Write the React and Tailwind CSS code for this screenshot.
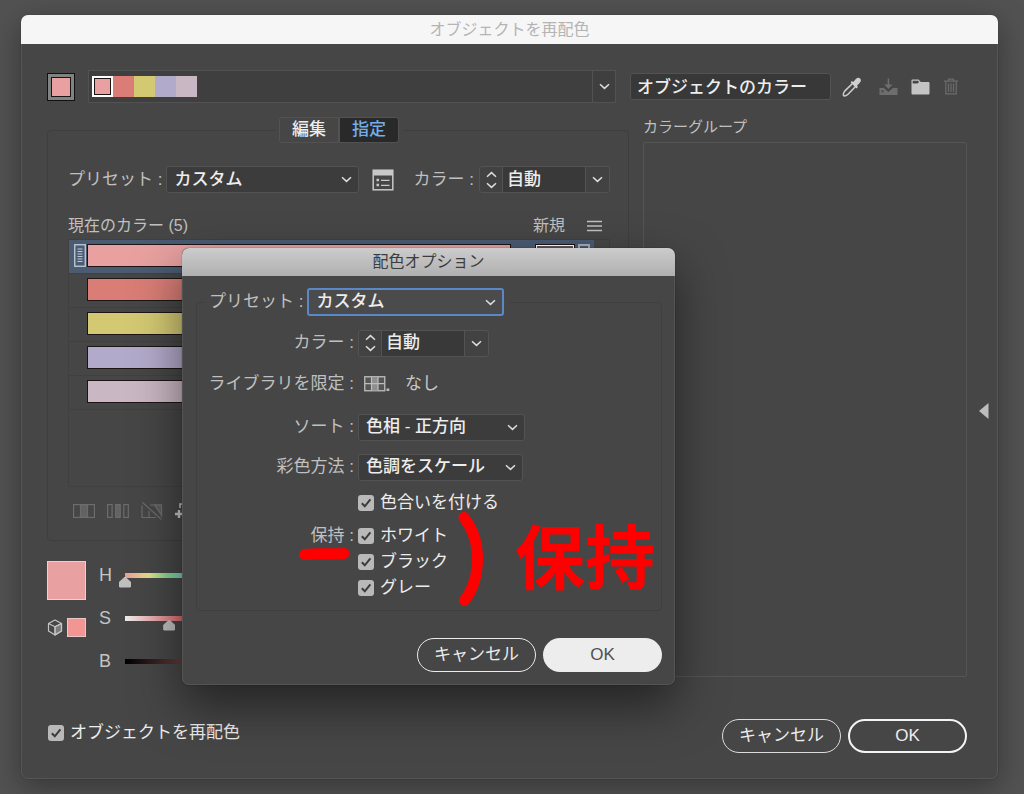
import React from "react";

const currentColors = [
  { id: "pink", fill: "bg-[#e8a0a0]" },
  { id: "coral", fill: "bg-[#d97d76]" },
  { id: "yellow", fill: "bg-[#d3c973]" },
  { id: "violet", fill: "bg-[#b2aaca]" },
  { id: "mauve", fill: "bg-[#c9b7c3]" },
];

function Chevron() {
  return (
    <svg width="11" height="7" viewBox="0 0 11 7" fill="none" stroke="#dcdcdc" strokeWidth="1.5" aria-hidden="true">
      <path d="M1 1.2 5.5 5.4 10 1.2" />
    </svg>
  );
}

function Select({ id, value, label, className }) {
  return (
    <div className={`grid items-center ${className}`}>
      <select
        id={id}
        aria-label={label}
        defaultValue={value}
        className="col-start-1 row-start-1 h-full w-full appearance-none rounded-[3px] bg-transparent pl-[7px] pr-6 text-[17px] leading-6 font-medium text-[#ededed] outline-none"
      >
        <option>{value}</option>
      </select>
      <span className="pointer-events-none col-start-1 row-start-1 mr-[6px] justify-self-end">
        <Chevron />
      </span>
    </div>
  );
}

function ColorCount({ id }) {
  return (
    <div className="flex h-[27px] w-[131px] shrink-0 rounded-[3px] border border-[#535353] bg-[#424242]">
      <div className="flex w-[22px] flex-col items-center justify-center gap-1">
        <button type="button" aria-label="増やす" className="rotate-180"><Chevron /></button>
        <button type="button" aria-label="減らす"><Chevron /></button>
      </div>
      <input
        id={id}
        defaultValue="自動"
        className="min-w-0 flex-1 border-x border-[#535353] bg-[#393939] pl-1 text-[17px] font-medium text-[#ededed] outline-none"
      />
      <button type="button" aria-label="カラー数を選択" className="flex w-[23px] items-center justify-center">
        <Chevron />
      </button>
    </div>
  );
}

function Check({ id, children }) {
  return (
    <div className="flex h-[26px] items-center gap-[6px]">
      <span className="grid size-4 place-items-center">
        <input
          id={id}
          type="checkbox"
          defaultChecked
          className="col-start-1 row-start-1 size-4 appearance-none rounded-[3px] bg-[#b9b9b9]"
        />
        <svg className="pointer-events-none col-start-1 row-start-1" width="12" height="12" viewBox="0 0 12 12" fill="none" stroke="#3c3c3c" strokeWidth="2" aria-hidden="true">
          <path d="M1.8 6.2 4.8 9.3 10.4 2.4" />
        </svg>
      </span>
      <label htmlFor={id} className="text-[17px] leading-6 text-[#ededed]">{children}</label>
    </div>
  );
}

function PillButton({ children, className }) {
  return (
    <button type="button" className={`h-[34px] w-[119px] rounded-full text-[17px] leading-6 ${className}`}>
      {children}
    </button>
  );
}

function Slider({ name, value, track }) {
  const id = `slider-${name}`;
  return (
    <div className="flex h-7 items-center">
      <label htmlFor={id} className="w-5 text-[18px] text-[#c4c4c4]">{name}</label>
      <div className="grid w-[142px] items-center">
        <div className={`col-start-1 row-start-1 mx-[6px] h-[5px] ${track}`} />
        <input
          id={id}
          type="range"
          defaultValue={value}
          className="col-start-1 row-start-1 h-[26px] w-full appearance-none bg-transparent [&::-webkit-slider-thumb]:mt-[14px] [&::-webkit-slider-thumb]:h-[11px] [&::-webkit-slider-thumb]:w-3 [&::-webkit-slider-thumb]:appearance-none [&::-webkit-slider-thumb]:bg-[#c0bfc0] [&::-webkit-slider-thumb]:[clip-path:polygon(50%_0,100%_50%,100%_92%,92%_100%,8%_100%,0_92%,0_50%)]"
        />
      </div>
    </div>
  );
}

function OptionRow({ label, htmlFor, children, className }) {
  return (
    <div className={`flex h-[26px] items-center ${className}`}>
      <label htmlFor={htmlFor} className="w-[161px] shrink-0 pr-1 text-right text-[17px] leading-6 text-[#c0c0c0]">
        {label}
      </label>
      {children}
    </div>
  );
}

function OptionsDialog() {
  return (
    <div
      role="dialog"
      aria-labelledby="options-title"
      className="absolute top-[248px] left-[182px] w-[493px] rounded-[7px] bg-[#464646] shadow-[0_20px_48px_rgba(0,0,0,0.5),0_0_1px_rgba(0,0,0,0.8)]"
    >
      <h2
        id="options-title"
        className="flex h-7 items-center justify-center rounded-t-[7px] bg-linear-to-b from-[#cccccc] to-[#b0b0b0] text-base leading-6 text-[#3c3c3c]"
      >
        配色オプション
      </h2>
      <div className="rounded-b-[7px] border-x border-b border-[#545454] pt-3 pr-3 pb-3 pl-[13px]">
        <fieldset className="rounded-[4px] border border-[#3f3f3f] pb-[9px]">
          <legend className="ml-[7px] flex h-7 items-center gap-1 px-[5px]">
            <label htmlFor="dlg-preset" className="text-[17px] leading-6 whitespace-pre text-[#c0c0c0]">プリセット :</label>
            <Select id="dlg-preset" value="カスタム" className="h-7 w-[197px] rounded-[3px] border-2 border-[#5b88c8] bg-[#4b4b4b]" />
          </legend>
          <OptionRow label="カラー :" htmlFor="dlg-colors" className="mt-[14px]">
            <ColorCount id="dlg-colors" />
          </OptionRow>
          <OptionRow label="ライブラリを限定 :" htmlFor="dlg-library" className="mt-[15px]">
            <button id="dlg-library" type="button" className="ml-[6px] flex items-center gap-[14px] text-[17px] leading-6 text-[#c8c8c8]">
              <svg width="27" height="16" viewBox="0 0 27 16" fill="none" aria-hidden="true">
                <rect x="0.75" y="0.75" width="20" height="14" fill="#555" stroke="#bdbdbd" strokeWidth="1.3" />
                <rect x="7.5" y="1" width="6.5" height="13.5" fill="#8e8e8e" />
                <path d="M7.5 1v13.5M14 1v13.5M1 7.7h19.5" stroke="#bdbdbd" strokeWidth="1.2" />
                <rect x="22.5" y="12.500" width="2.800" height="2.500" fill="#bdbdbd" />
              </svg>
              なし
            </button>
          </OptionRow>
          <OptionRow label="ソート :" htmlFor="dlg-sort" className="mt-[17px]">
            <Select id="dlg-sort" value="色相 - 正方向" className="h-[27px] w-[167px] rounded-[3px] border border-[#535353] bg-[#3c3c3c]" />
          </OptionRow>
          <OptionRow label="彩色方法 :" htmlFor="dlg-method" className="mt-[14px]">
            <Select id="dlg-method" value="色調をスケール" className="h-[27px] w-[165px] rounded-[3px] border border-[#535353] bg-[#3c3c3c]" />
          </OptionRow>
          <div className="mt-[10px] ml-[161px]">
            <Check id="dlg-tint">色合いを付ける</Check>
          </div>
          <OptionRow label="保持 :" htmlFor="dlg-white" className="mt-[7px]">
            <Check id="dlg-white">ホワイト</Check>
          </OptionRow>
          <div className="ml-[161px]">
            <Check id="dlg-black">ブラック</Check>
            <Check id="dlg-gray">グレー</Check>
          </div>
        </fieldset>
        <div className="mt-[27px] flex justify-end gap-[7px]">
          <PillButton className="border border-[#ececec] text-[#ececec]">キャンセル</PillButton>
          <PillButton className="bg-[#ededed] text-[#505050]">OK</PillButton>
        </div>
      </div>

      {/* Hand-drawn notes over the dialog */}
      <svg className="pointer-events-none absolute top-[252px] left-[110px]" width="210" height="120" viewBox="0 0 210 120" fill="none" stroke="#ff0000" strokeWidth="11" strokeLinecap="round" aria-hidden="true">
        <path d="M12.500 54.500C24 53 38 54.500 52 53.500" />
        <path d="M172 17.500C183 32 185.500 46 185.500 58 185.500 75 182 88 172.500 100.500" />
      </svg>
      <p className="pointer-events-none absolute top-[262px] left-[333px] text-[70px] leading-[100px] font-bold whitespace-nowrap text-[#ff0000]">
        保持
      </p>
    </div>
  );
}

export default function App() {
  return (
    <div className="relative min-h-screen overflow-hidden bg-[#525252] py-[15px] pr-[26px] pl-[21px] font-['Liberation_Sans','Noto_Sans_CJK_JP',sans-serif]">
      <main className="rounded-[7px] shadow-[0_8px_30px_rgba(0,0,0,0.35),0_0_1px_rgba(0,0,0,0.6)]">
        <h1 className="flex h-[29px] items-center justify-center rounded-t-[7px] bg-[#f6f6f6] text-base leading-6 text-[#b4b4b4]">
          オブジェクトを再配色
        </h1>
        <div className="flex rounded-b-[7px] border-x border-b border-[#555555] bg-[#464646]">
          <div className="min-w-0 flex-1 pt-[26px] pb-[25px] pl-[25px]">
            <div className="flex gap-[1px]">
              {/* Left side: active colours and assignment */}
              <section className="min-w-0 flex-1">
                <div className="flex items-center gap-[13px] pr-[13px]">
                  <button type="button" aria-label="元のカラー" className="size-7 border border-[#111] bg-[#7e8482] p-[3px]">
                    <span className="block size-full border border-[#1d1414] bg-[#e8a0a0]" />
                  </button>
                  <div className="flex h-[33px] flex-1 border border-[#525252] bg-[#3f3f3f]">
                    <div className="flex flex-1 items-center pl-[3px]">
                      <span className="size-[21px] border-2 border-white bg-[#e8a0a0]">
                        <span className="block size-full border border-[#1d1414]" />
                      </span>
                      {currentColors.slice(1).map((c) => (
                        <span key={c.id} className={`h-[21px] w-[21px] ${c.fill}`} />
                      ))}
                    </div>
                    <button type="button" aria-label="カラーを選択" className="flex w-[23px] items-center justify-center border-l border-[#525252]">
                      <Chevron />
                    </button>
                  </div>
                </div>

                <fieldset className="mt-[14px] rounded-[4px] border border-[#3e3e3e] pr-[18px] pb-5 pl-5">
                  <legend className="mx-auto flex w-fit px-1">
                    <div className="flex h-[26px] text-[17px] leading-6 font-medium">
                      <button type="button" className="w-[60px] rounded-l-[3px] border border-[#525252] text-[#ededed]">編集</button>
                      <button type="button" aria-pressed="true" className="w-[60px] rounded-r-[3px] border border-[#525252] bg-[#292929] text-[#74ade8]">指定</button>
                    </div>
                  </legend>
                  <div className="mt-[23px] flex items-center">
                    <label htmlFor="preset" className="shrink-0 text-[17px] leading-6 text-[#c0c0c0]">プリセット :</label>
                    <Select id="preset" value="カスタム" className="ml-1 h-[27px] w-[193px] rounded-[3px] border border-[#535353] bg-[#3c3c3c]" />
                    <button type="button" aria-label="配色オプション" className="ml-[13px]">
                      <svg width="22" height="22" viewBox="0 0 22 22" fill="none" aria-hidden="true">
                        <rect x="1.200" y="1.200" width="19.600" height="19.600" stroke="#c8c8c8" strokeWidth="1.500" />
                        <rect x="1" y="1" width="20" height="5.500" fill="#c8c8c8" />
                        <path d="M4.500 11h2.500M4.500 16h2.500" stroke="#c8c8c8" strokeWidth="2.400" />
                        <path d="M9 11.300h8.500M9 16.300h8.500" stroke="#c8c8c8" strokeWidth="1.300" />
                      </svg>
                    </button>
                    <div className="ml-auto flex items-center gap-[5px]">
                      <label htmlFor="colors" className="shrink-0 text-[17px] leading-6 text-[#c0c0c0]">カラー :</label>
                      <ColorCount id="colors" />
                    </div>
                  </div>
                  <div className="mt-5 flex h-[26px] items-center text-base leading-6 text-[#c0c0c0]">
                    <h3>現在のカラー (5)</h3>
                    <span className="mr-[22px] ml-auto">新規</span>
                    <button type="button" aria-label="メニュー" className="mr-2">
                      <svg width="15" height="12" viewBox="0 0 15 12" stroke="#c0c0c0" strokeWidth="1.300" aria-hidden="true">
                        <path d="M0 1.500h15M0 6h15M0 10.500h15" />
                      </svg>
                    </button>
                  </div>
                  <div className="h-[248px] border border-[#404040] pr-[15px]">
                    {currentColors.map((c, i) => (
                      <div
                        key={c.id}
                        className={`flex h-[34px] border-b border-[#404040] pt-1 pr-1 pl-[5px] ${i === 0 ? "bg-[#4a5b72]" : ""}`}
                      >
                        <span className="w-[13px]">
                          {i === 0 && (
                            <svg width="12" height="23" viewBox="0 0 12 23" fill="none" stroke="#c3ccd6" aria-hidden="true">
                              <rect x="0.750" y="0.750" width="10.500" height="21.500" strokeWidth="1.300" />
                              <path d="M3.500 5h5M3.500 7.500h5M3.500 10h5M3.500 12.500h5M3.500 15h5M3.500 17.500h5" />
                            </svg>
                          )}
                        </span>
                        <span className={`h-[23px] flex-1 border border-[#1c1415] ${c.fill}`} />
                        <span className="ml-6 h-[23px] w-10 border border-[#1c1415] bg-[#5d565c] outline outline-white -outline-offset-2" />
                        <span className="ml-[3px] h-[23px] w-3 border-2 border-[#a4aeb8]" />
                      </div>
                    ))}
                  </div>
                  <div className="mt-[15px] flex h-[18px] items-center gap-3">
                    <button type="button" aria-label="カラーを行に結合" className="ml-[5px]">
                      <svg width="22" height="14" viewBox="0 0 22 14" fill="none" stroke="#6c6c6c" strokeWidth="1.200" aria-hidden="true">
                        <rect x="0.600" y="0.600" width="20.800" height="12.800" />
                        <path d="M7.500 1h7v12h-7z" fill="#626262" />
                      </svg>
                    </button>
                    <button type="button" aria-label="カラーを異なる行に分割">
                      <svg width="22" height="14" viewBox="0 0 22 14" fill="none" stroke="#6c6c6c" strokeWidth="1.200" aria-hidden="true">
                        <rect x="0.600" y="0.600" width="4.500" height="12.800" />
                        <rect x="8.700" y="0.600" width="4.500" height="12.800" fill="#626262" />
                        <rect x="16.800" y="0.600" width="4.500" height="12.800" />
                      </svg>
                    </button>
                    <button type="button" aria-label="選択したカラーを除外">
                      <svg width="22" height="18" viewBox="0 0 22 18" fill="none" stroke="#6c6c6c" strokeWidth="1.200" aria-hidden="true">
                        <path d="M1 3.500v12h14M8 9v6.500M9 3h11.500v12" />
                        <path d="M13.500 3h7v10z" fill="#5a5a5a" />
                        <path d="M1.500 0.500 20.500 17.500" />
                      </svg>
                    </button>
                    <button type="button" aria-label="新しい行">
                      <svg width="22" height="16" viewBox="0 0 22 16" fill="none" stroke="#c8c8c8" strokeWidth="1.500" aria-hidden="true">
                        <path d="M5 5V1h15v13h-9" />
                        <path d="M4 7v8M0 11h8" strokeWidth="2.400" />
                      </svg>
                    </button>
                  </div>
                </fieldset>

                <div className="mt-5 flex">
                  <div>
                    <div className="size-[39px] border border-[#ead0d0] bg-[#e8a0a0]" />
                    <div className="mt-[18px] flex items-center gap-1">
                      <svg width="16" height="17" viewBox="0 0 16 17" fill="none" stroke="#c4c4c4" strokeWidth="1.200" strokeLinejoin="round" aria-hidden="true">
                        <path d="M8 7.800 14.500 4.500v7.500L8 16z" fill="#7c7c7c" />
                        <path d="M8 1 14.500 4.500v7.500L8 16l-6.500-4v-7.500zM1.500 4.500 8 7.800l6.500-3.300M8 7.800V16" />
                      </svg>
                      <span className="size-[19px] border border-[#e8c8c8] bg-[#f29693]" />
                    </div>
                  </div>
                  <div className="ml-[13px] flex flex-col gap-[15px] pb-[2px]">
                    <Slider name="H" value={0} track="bg-[linear-gradient(to_right,#eb9a96,#e6dc8c_18%,#80d88c_33%,#7cc8d8_47%,#8a8fe8_66%,#d88ad8_83%,#eb9a96)]" />
                    <Slider name="S" value={34} track="bg-[linear-gradient(to_right,#ececec,#dc6468_45%,#e02828)]" />
                    <Slider name="B" value={91} track="bg-[linear-gradient(to_right,#000,#673d3f_45%,#e8a0a0)]" />
                  </div>
                </div>
              </section>

              {/* Right side: colour groups */}
              <section className="flex w-[337px] shrink-0 flex-col">
                <div className="flex h-[33px] items-center">
                  <input
                    aria-label="カラーグループ名"
                    defaultValue="オブジェクトのカラー"
                    className="mr-[11px] h-[27px] w-[201px] rounded-[3px] border border-[#525252] bg-[#383838] pb-[3px] pl-[6px] text-[17px] font-medium text-[#ededed] outline-none"
                  />
                  <button type="button" aria-label="スポイト">
                    <svg width="20" height="20" viewBox="0 0 20 20" fill="none" aria-hidden="true">
                      <path d="M10.500 6.500 3.200 13.600C2.300 14.600 1.300 16.800 1.300 17.800c0 .8.500 1.200 1.300 1.100 1.200-.1 2.800-1 3.700-1.900L13.500 9.500" stroke="#cfcfcf" strokeWidth="1.500" />
                      <path d="M8.600 5.400 9.900 4.100l1.300.9 2.900-3.300c1.100-1.200 2.800-1.400 4-.3 1.200 1.200 1 2.900-.1 4L15 8.700l.9 1.400-1.300 1.400z" fill="#cfcfcf" />
                    </svg>
                  </button>
                  <button type="button" aria-label="変更をカラーグループに保存" className="ml-[17px]">
                    <svg width="19" height="18" viewBox="0 0 19 18" aria-hidden="true">
                      <path d="M8.600 0.500h1.600v6h3.300L9.400 11 5.300 6.500h3.300zM0.500 10h4.300l4.600 4 4.600-4h4.500v7h-18zM2.500 12.300v2h2v-2z" fill="#6e6e6e" fillRule="evenodd" />
                    </svg>
                  </button>
                  <button type="button" aria-label="新規カラーグループ" className="ml-[13px]">
                    <svg width="19" height="16" viewBox="0 0 19 16" aria-hidden="true">
                      <path d="M0.500 1.500q0-1 1-1h6l2.300 2.500h7.700q1 0 1 1v10.500q0 1-1 1h-16q-1 0-1-1zM1.700 2.200v2.200h4.600l1.900-1.400-1.300-1.300H1.700z" fill="#c4c4c4" fillRule="evenodd" />
                    </svg>
                  </button>
                  <button type="button" aria-label="カラーグループを削除" className="ml-[14px]">
                    <svg width="14" height="17" viewBox="0 0 14 17" fill="none" stroke="#6c6c6c" strokeWidth="1.200" aria-hidden="true">
                      <path d="M0 3.200h14M4.500 3V1.200h5V3M1.800 3.500v12.300h10.400V3.500M4.500 5.500v8.500M7 5.500v8.500M9.500 5.500v8.500" />
                    </svg>
                  </button>
                </div>
                <div className="ml-[13px] flex flex-1 flex-col">
                  <h3 className="mt-3 mb-[3px] text-[15px] leading-6 text-[#c0c0c0]">カラーグループ</h3>
                  <div className="flex-1 rounded-[2px] border border-[#555555]" />
                </div>
              </section>
            </div>

            <footer className="mt-[42px] flex items-center">
              <div className="pb-[6px] pl-[1px]">
                <Check id="recolor">オブジェクトを再配色</Check>
              </div>
              <div className="ml-auto flex gap-[7px]">
                <PillButton className="border border-[#dcdcdc] text-[#ececec]">キャンセル</PillButton>
                <PillButton className="border-2 border-[#f4f4f4] text-[#ececec]">OK</PillButton>
              </div>
            </footer>
          </div>
          <button type="button" aria-label="カラーグループを隠す" className="mr-2 ml-3 self-center">
            <svg width="10" height="16" viewBox="0 0 10 16" aria-hidden="true">
              <path d="M9.500 0v16L0 8z" fill="#bdbdbd" />
            </svg>
          </button>
        </div>
      </main>
      <OptionsDialog />
    </div>
  );
}
